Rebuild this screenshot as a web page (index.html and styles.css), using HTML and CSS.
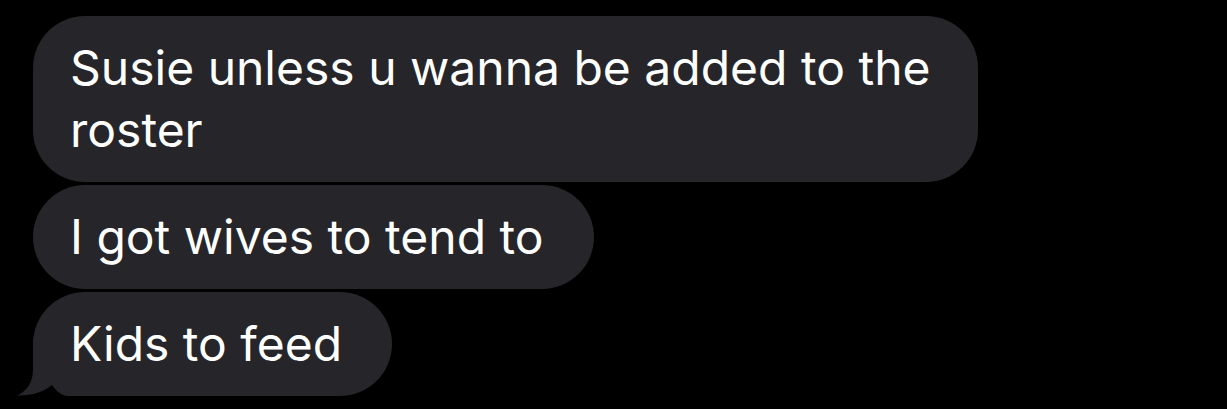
FILE: index.html
```html
<!DOCTYPE html>
<html lang="en">
<head>
<meta charset="utf-8">
<title>Messages</title>
<link rel="stylesheet" href="styles.css">
</head>
<body>
<div class="thread">
  <div class="bubble wide"><span class="text">Susie unless u wanna be added to the roster</span></div>
  <div class="bubble"><span class="text">I got wives to tend to</span></div>
  <div class="bubble last">
    <svg class="tail" viewBox="0 0 70 57" width="70" height="57" aria-hidden="true">
      <path d="M16 0 L70 0 L70 57 L50 57 C44 56 39 52 35 46 C27 53 14 57 0 56.5 C10 52 16 44 16 30 Z" fill="#26262a"/>
    </svg>
    <span class="text">Kids to feed</span>
  </div>
</div>
</body>
</html>
```
FILE: styles.css
```css
html, body {
  margin: 0;
  padding: 0;
  background: #000;
}
body {
  width: 1227px;
  height: 409px;
  overflow: hidden;
  font-family: "Inter", "Liberation Sans", sans-serif;
}
.thread {
  display: flex;
  flex-direction: column;
  align-items: flex-start;
  gap: 3px;
  padding: 16px 0 0 33px;
}
.bubble {
  position: relative;
  box-sizing: border-box;
  max-width: 945px;
  background: #26262a;
  color: #fff;
  font-size: 48px;
  line-height: 62px;
  padding: 21px 50px 21px 37px;
  border-radius: 52px;
}
.bubble.wide {
  width: 945px;
  padding-right: 24px;
}
.text {
  position: relative;
  z-index: 1;
}
.tail {
  position: absolute;
  left: -16px;
  bottom: 0;
  z-index: 0;
}
```
